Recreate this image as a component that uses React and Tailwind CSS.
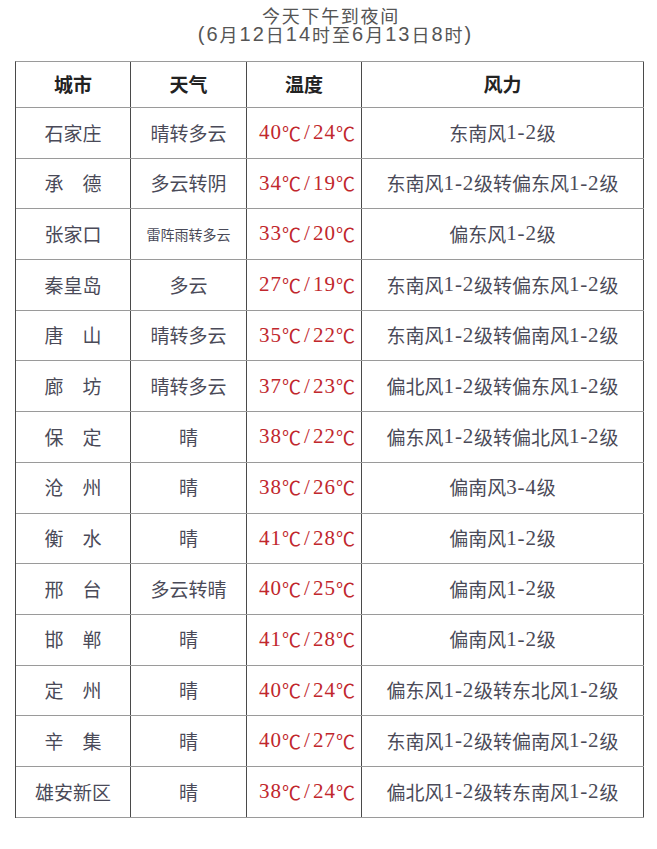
import React from "react";

const rows = [
  ["石家庄", "晴转多云", "40℃/24℃", "东南风1-2级"],
  ["承　德", "多云转阴", "34℃/19℃", "东南风1-2级转偏东风1-2级"],
  ["张家口", "雷阵雨转多云", "33℃/20℃", "偏东风1-2级"],
  ["秦皇岛", "多云", "27℃/19℃", "东南风1-2级转偏东风1-2级"],
  ["唐　山", "晴转多云", "35℃/22℃", "东南风1-2级转偏南风1-2级"],
  ["廊　坊", "晴转多云", "37℃/23℃", "偏北风1-2级转偏东风1-2级"],
  ["保　定", "晴", "38℃/22℃", "偏东风1-2级转偏北风1-2级"],
  ["沧　州", "晴", "38℃/26℃", "偏南风3-4级"],
  ["衡　水", "晴", "41℃/28℃", "偏南风1-2级"],
  ["邢　台", "多云转晴", "40℃/25℃", "偏南风1-2级"],
  ["邯　郸", "晴", "41℃/28℃", "偏南风1-2级"],
  ["定　州", "晴", "40℃/24℃", "偏东风1-2级转东北风1-2级"],
  ["辛　集", "晴", "40℃/27℃", "东南风1-2级转偏南风1-2级"],
  ["雄安新区", "晴", "38℃/24℃", "偏北风1-2级转东南风1-2级"],
];

const cjk = { fontFamily: '"Noto Sans CJK SC", sans-serif' };
const serif = { fontFamily: '"Liberation Serif", serif' };
const sans = { fontFamily: '"Liberation Sans", sans-serif' };

// ascii runs (digits, dash, slash, parens) get a latin face, a bit larger than the CJK text
function Mixed({ text, num = "text-[21px] tracking-[0.8px]", face = serif }) {
  const parts = text.split(/([0-9\-()]+|\/)/).filter(Boolean);
  return parts.map((p, i) => {
    if (p === "/")
      return (
        <span key={i} className="mx-[3px] text-[21px]" style={face}>
          /
        </span>
      );
    if (/^[0-9\-()]+$/.test(p))
      return (
        <span key={i} className={num} style={face}>
          {p}
        </span>
      );
    return <span key={i}>{p}</span>;
  });
}

const cols = "grid grid-cols-[115px_116px_115px_282px]";
const cell = "flex items-center justify-center border-r border-[#4a4a4a]";

export default function App() {
  return (
    <div className="w-[657px] h-[849px] bg-white text-[#4a4a58]" style={cjk}>
      <div className="flex flex-col items-center pt-[6px] gap-[1px] pl-[5px] text-[18px] leading-none text-[#555]">
        <div className="h-[18px] flex items-center tracking-[1.7px]">今天下午到夜间</div>
        <div className="h-[18px] flex items-center pl-[9px] tracking-[2px]">
          <Mixed
            text="(6月12日14时至6月13日8时)"
            num="text-[20px] leading-none tracking-[2px]"
            face={sans}
          />
        </div>
      </div>

      <div className="ml-[15px] mt-[18px] w-[629px] border-l border-t border-l-[#4a4a4a] border-t-[#9a9a9a]">
        <div className={`${cols} h-[46px] border-b border-[#9a9a9a] text-[19px] font-bold text-[#222]`}>
          <div className={cell}>城市</div>
          <div className={cell}>天气</div>
          <div className={cell}>温度</div>
          <div className={cell}>风力</div>
        </div>
        {rows.map((r, i) => (
          <div
            key={i}
            className={`${cols} h-[50.7px] border-b border-[#9a9a9a] text-[19px]`}
          >
            <div className={cell}>{r[0]}</div>
            <div className={`${cell} ${r[1].length > 4 ? "text-[14px]" : ""}`}>{r[1]}</div>
            <div className={`${cell} pl-[6px] text-[#c1272d]`}>
              <Mixed text={r[2]} num="text-[21px] tracking-[1px]" />
            </div>
            <div className={cell}>
              <Mixed text={r[3]} />
            </div>
          </div>
        ))}
      </div>
    </div>
  );
}
